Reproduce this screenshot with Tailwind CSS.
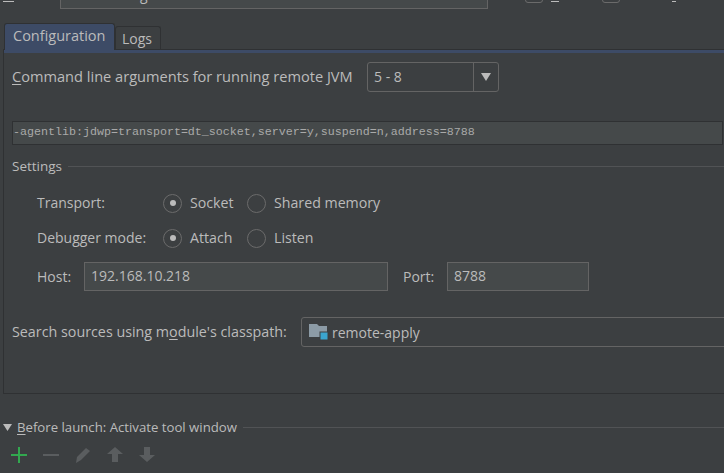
<!DOCTYPE html>
<html lang="en">
<head>
    <meta charset="UTF-8">
    <title>Remote debug configuration</title>
    <script src="https://cdn.jsdelivr.net/npm/@tailwindcss/browser@4"></script>
</head>
<body class="w-[724px] h-[473px] overflow-hidden bg-[#3c3f41] text-[#bbbbbb] text-[14px] font-['Open_Sans',sans-serif]">
    <!-- top row, cut off by the window -->
    <div class="h-[9px] overflow-hidden flex items-end relative">
        <span class="w-[11px] ml-[3px] h-[1px] mb-[7px] bg-[#bbbbbb]"></span>
        <div class="ml-[46px] w-[428px] h-[20px] border border-[#646464] bg-[#45494a] shrink-0 pl-[6px] leading-[10px] text-[#bbbbbb]">12.12 debug</div>
        <span class="ml-[37px] w-[18px] h-[12px] mb-[6px] border border-[#6b6b6b] rounded-[3px] shrink-0"></span>
        <span class="ml-[8px] w-[8px] h-[1px] mb-[7px] bg-[#bbbbbb] shrink-0"></span>
        <span class="ml-[43px] w-[18px] h-[12px] mb-[6px] border border-[#6b6b6b] rounded-[3px] shrink-0"></span>
        <span class="ml-[52px] w-[4px] h-[1px] mb-[7px] bg-[#bbbbbb] shrink-0"></span>
    </div>

    <!-- tabs -->
    <div class="mt-[14px] ml-[4px] h-[26px] flex items-end relative">
        <div class="w-[111px] h-[27px] -mb-[1px] bg-[#3d4b66] border border-b-0 border-[#2f3133] rounded-t-[3px] pl-[8px] pt-[1px] leading-[22px] text-[14.5px] z-10">Configuration</div>
        <div class="w-[46px] h-[23px] border border-b-0 border-[#2f3133] rounded-t-[3px] pl-[6px] leading-[24px]">Logs</div>
    </div>

    <!-- configuration panel -->
    <div class="ml-[3px] h-[345px] border-l border-b border-[#2f3133] relative overflow-hidden">
        <div class="h-[4px] border-t border-[#2f3133] bg-[#3d4b66]"></div>

        <div class="pl-[8px] pt-[9px] flex items-center h-[38px]">
            <span class="w-[355px] text-[14.6px]"><span class="underline underline-offset-2">C</span>ommand line arguments for running remote JVM</span>
            <div class="w-[132px] h-[30px] border border-[#646464] rounded-[3px] flex items-center">
                <span class="w-[106px] pl-[6px]">5 - 8</span>
                <span class="w-[25px] h-full border-l border-[#646464] flex items-center justify-center">
                    <svg width="10" height="8" viewBox="0 0 10 8"><path d="M0 0H10L5 8Z" fill="#bbbbbb"/></svg>
                </span>
            </div>
        </div>

        <div class="mt-[30px] ml-[8px] w-[711px] h-[24px] border border-[#2f3133] bg-[#45494a] flex items-center font-['Liberation_Mono',monospace] text-[11.67px] text-[#a9a9a9] whitespace-nowrap">-agentlib:jdwp=transport=dt_socket,server=y,suspend=n,address=8788</div>

        <div class="mt-[11px] ml-[8px] flex items-center text-[13.5px] h-[20px]">
            <span>Settings</span>
            <span class="ml-[6px] flex-1 h-[1px] bg-[#515355]"></span>
        </div>

        <div class="ml-[33px] mt-[17px] grid grid-cols-[126px_auto] gap-y-[15px] items-center">
            <span class="h-[20px] leading-[20px] -mt-[1px]">Transport:</span>
            <div class="flex items-center h-[20px] text-[14.2px]">
                <span class="w-[19px] h-[19px] rounded-full border border-[#6b6b6b] flex items-center justify-center"><span class="w-[6px] h-[6px] rounded-full bg-[#bbbbbb]"></span></span>
                <span class="ml-[8px] w-[57px]">Socket</span>
                <span class="w-[19px] h-[19px] rounded-full border border-[#6b6b6b]"></span>
                <span class="ml-[8px]">Shared memory</span>
            </div>
            <span class="h-[20px] leading-[20px]">Debugger mode:</span>
            <div class="flex items-center h-[20px] text-[14.2px]">
                <span class="w-[19px] h-[19px] rounded-full border border-[#6b6b6b] flex items-center justify-center"><span class="w-[6px] h-[6px] rounded-full bg-[#bbbbbb]"></span></span>
                <span class="ml-[8px] w-[57px]">Attach</span>
                <span class="w-[19px] h-[19px] rounded-full border border-[#6b6b6b]"></span>
                <span class="ml-[8px]">Listen</span>
            </div>
        </div>

        <div class="ml-[33px] mt-[14px] flex items-center h-[29px]">
            <span class="w-[47px]">Host:</span>
            <div class="w-[304px] h-[29px] border border-[#646464] bg-[#45494a] pl-[6px] leading-[26px]">192.168.10.218</div>
            <span class="ml-[15px] w-[44px]">Port:</span>
            <div class="w-[142px] h-[29px] border border-[#646464] bg-[#45494a] pl-[6px] leading-[26px]">8788</div>
        </div>

        <div class="ml-[8px] mt-[26px] flex items-center h-[30px]">
            <span class="w-[289px] shrink-0 whitespace-nowrap text-[14.3px]">Search sources using m<span class="underline underline-offset-2">o</span>dule's classpath:</span>
            <div class="w-[440px] shrink-0 h-[30px] border border-[#646464] rounded-[3px] flex items-center pl-[7px]">
                <svg width="20" height="18" viewBox="0 0 20 18">
                    <path d="M0 1H8L10 3H18V14H0Z" fill="#8c9ba6"/>
                    <rect x="11" y="9" width="8" height="8" fill="#3ba5cf" stroke="#3c3f41" stroke-width="1"/>
                </svg>
                <span class="ml-[3px]">remote-apply</span>
            </div>
        </div>
    </div>

    <!-- before launch -->
    <div class="mt-[23px] ml-[3px] flex items-center h-[20px] text-[13.2px]">
        <svg width="9" height="7" viewBox="0 0 9 7"><path d="M0 0H9L4.5 7Z" fill="#bbbbbb"/></svg>
        <span class="ml-[5px] leading-[22px]"><span class="underline underline-offset-2">B</span>efore launch: Activate tool window</span>
        <span class="ml-[6px] flex-1 h-[1px] bg-[#515355]"></span>
    </div>

    <div class="mt-[10px] ml-[11px] flex items-center gap-[16px] h-[16px]">
        <svg width="16" height="16" viewBox="0 0 16 16"><path d="M8 0V16M0 8H16" stroke="#32a84f" stroke-width="2"/></svg>
        <svg width="16" height="16" viewBox="0 0 16 16"><path d="M0 8H16" stroke="#5a5d5f" stroke-width="2"/></svg>
        <svg width="16" height="16" viewBox="0 0 16 16"><path d="M11 1L15 4L6 13L1 16L2 10Z" fill="#5a5d5f"/></svg>
        <svg width="16" height="16" viewBox="0 0 16 16"><path d="M8 0L16 7H11V15H5V7H0Z" fill="#5a5d5f"/></svg>
        <svg width="16" height="16" viewBox="0 0 16 16"><path d="M8 15L16 8H11V0H5V8H0Z" fill="#5a5d5f"/></svg>
    </div>
</body>
</html>
